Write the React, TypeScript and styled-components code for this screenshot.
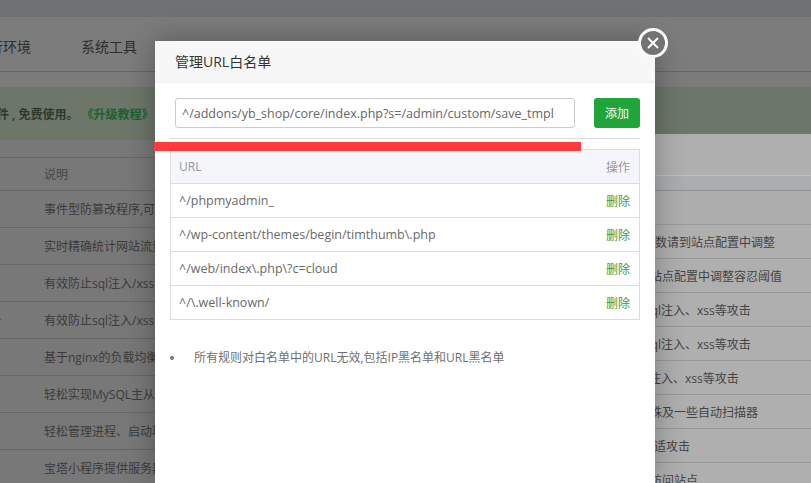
import React from "react";
import styled, { createGlobalStyle } from "styled-components";
import { X } from "lucide-react";

const FONT = `"Open Sans", "Noto Sans CJK SC", sans-serif`;

const Global = createGlobalStyle`
  html, body { margin: 0; padding: 0; background: #7b7b7b; }
  * { box-sizing: border-box; }
  body { font-family: ${FONT}; }
`;

const Page = styled.div`
  position: relative;
  width: 811px;
  height: 483px;
  overflow: hidden;
  display: flex;
  flex-direction: column;
  background: #7b7b7b;
`;
const TopStrip = styled.div`
  height: 17px;
  flex: none;
  background: #707173;
`;
const Nav = styled.nav`
  height: 55px;
  flex: none;
  display: flex;
  align-items: center;
  gap: 50px;
  margin-left: -25px;
  padding-top: 4px;
  background: #7c7c7c;
  border-bottom: 1px solid #666;
  color: #2e2e2e;
  font-size: 14px;
`;
const Panes = styled.div`
  flex: 1;
  display: flex;
  padding-top: 15px;
  min-height: 0;
`;
const LeftPane = styled.div`
  width: 155px;
  flex: none;
  overflow: hidden;
  background: #787878;
`;
const Gap = styled.div`
  width: 500px;
  flex: none;
`;
const RightPane = styled.div`
  flex: 1;
  overflow: hidden;
  background: #afafaf;
`;
const Banner = styled.div<{ $h: number }>`
  height: ${(p) => p.$h}px;
  display: flex;
  align-items: center;
  margin-left: -15px;
  white-space: pre;
  background: #6c7669;
  color: #2f3a2d;
  font-size: 12px;
  font-weight: 600;
`;
const BannerLink = styled.span`
  color: #1c6130;
  margin-left: 3px;
`;
const LeftHead = styled.div`
  margin-top: 17px;
  height: 34px;
  padding-left: 44px;
  display: flex;
  align-items: center;
  border-top: 1px solid #666;
  border-bottom: 1px solid #666;
  color: #464646;
  font-size: 12px;
`;
const LeftRow = styled.div`
  height: 37px;
  padding-left: 44px;
  display: flex;
  align-items: center;
  white-space: nowrap;
  border-bottom: 1px solid #666;
  color: #3b3b3b;
  font-size: 12px;
  position: relative;
`;
const Tick = styled.span`
  position: absolute;
  left: -1px;
  top: 17px;
  width: 2px;
  height: 1px;
  background: #2b5d80;
`;
const RightHead = styled.div`
  margin-top: 41px;
  height: 16px;
  border-top: 1px solid #c0c0c0;
  border-bottom: 1px solid #8f8f8f;
  background: #acadb0;
`;
const RightSpacer = styled.div`
  height: 34px;
  border-bottom: 1px solid #9a9a9a;
  background: #aeaeae;
`;
const RightRow = styled.div`
  height: 34px;
  display: flex;
  align-items: center;
  white-space: nowrap;
  border-bottom: 1px solid #999;
  color: #444;
  font-size: 12px;
`;
const RightText = styled.span<{ $shift: number }>`
  margin-left: ${(p) => p.$shift}px;
`;

const Modal = styled.div`
  position: absolute;
  left: 155px;
  top: 41px;
  width: 500px;
  height: 442px;
  background: #fff;
  box-shadow: 0 0 28px rgba(0, 0, 0, 0.3);
  display: flex;
  flex-direction: column;
`;
const ModalHeader = styled.header`
  height: 42px;
  flex: none;
  display: flex;
  align-items: center;
  padding: 0 0 2px 20px;
  background: #f7f7f7;
  border-bottom: 1px solid #eee;
  color: #333;
  font-size: 14px;
`;
const CloseButton = styled.button`
  position: absolute;
  left: 483px;
  top: -13px;
  width: 30px;
  height: 30px;
  padding: 0;
  display: flex;
  align-items: center;
  justify-content: center;
  border: 3px solid #fff;
  border-radius: 50%;
  background: #737373;
  color: #fff;
`;
const Body = styled.div`
  padding: 15px 15px 0;
  display: flex;
  flex-direction: column;
`;
const Form = styled.div`
  display: flex;
  justify-content: space-between;
  padding: 0 0 10px 5px;
  border-bottom: 1px solid #ddd;
`;
const Input = styled.input`
  width: 400px;
  height: 30px;
  padding: 0 6px;
  border: 1px solid #ccc;
  border-radius: 3px;
  color: #666;
  font-family: ${FONT};
  font-size: 12.5px;
  outline: none;
`;
const AddButton = styled.button`
  width: 46px;
  height: 30px;
  padding: 0;
  border: 0;
  border-radius: 3px;
  background: #20a53a;
  color: #fff;
  font-family: ${FONT};
  font-size: 12px;
`;
const RedMark = styled.div`
  position: absolute;
  left: -1px;
  top: 101px;
  width: 427px;
  height: 9px;
  background: #ff3b3b;
  z-index: 1;
`;
const Table = styled.div`
  margin-top: 10px;
  border: 1px solid #ddd;
  border-bottom: 0;
`;
const Row = styled.div<{ $head?: boolean }>`
  height: 34px;
  display: flex;
  align-items: center;
  justify-content: space-between;
  padding: 0 8px;
  border-bottom: 1px solid #ddd;
  background: ${(p) => (p.$head ? "#f5f6fa" : "#fff")};
  color: ${(p) => (p.$head ? "#999" : "#6a6a6a")};
  font-size: 12px;
`;
const RuleText = styled.span`
  font-size: 12.5px;
`;
const Action = styled.span<{ $green?: boolean }>`
  margin-right: 1px;
  color: ${(p) => (p.$green ? "#2f9e4a" : "#999")};
`;
const Note = styled.div`
  margin-top: 30px;
  display: flex;
  align-items: center;
  gap: 20px;
  color: #6f6f6f;
  font-size: 12px;
  line-height: 16px;
`;
const Dot = styled.span`
  width: 4px;
  height: 4px;
  flex: none;
  border-radius: 50%;
  background: #777;
`;

const rules = [
  "^/phpmyadmin_",
  "^/wp-content/themes/begin/timthumb\\.php",
  "^/web/index\\.php\\?c=cloud",
  "^/\\.well-known/",
];
const leftRows = [
  "事件型防篡改程序,可",
  "实时精确统计网站流量",
  "有效防止sql注入/xss",
  "有效防止sql注入/xss",
  "基于nginx的负载均衡",
  "轻松实现MySQL主从",
  "轻松管理进程、启动项",
  "宝塔小程序提供服务器",
];
const rightRows: [string, number][] = [
  ["数请到站点配置中调整", 0],
  ["站点配置中调整容忍阈值", -5],
  ["sql注入、xss等攻击", -10],
  ["sql注入、xss等攻击", -10],
  ["注入、xss等攻击", -6],
  ["殊及一些自动扫描器", -5],
  ["适攻击", -1],
  ["访问站点", -5],
];

export default function App() {
  return (
    <Page>
      <Global />
      <TopStrip />
      <Nav>
        <span>运行环境</span>
        <span>系统工具</span>
      </Nav>
      <Panes>
        <LeftPane>
          <Banner $h={53}>
            {"插件 , 免费使用。"}
            <BannerLink>《升级教程》</BannerLink>
          </Banner>
          <LeftHead>说明</LeftHead>
          {leftRows.map((t, i) => (
            <LeftRow key={i}>
              {i === 3 && <Tick />}
              {t}
            </LeftRow>
          ))}
        </LeftPane>
        <Gap />
        <RightPane>
          <Banner $h={47} />
          <RightHead />
          <RightSpacer />
          {rightRows.map(([t, s], i) => (
            <RightRow key={i}>
              <RightText $shift={s}>{t}</RightText>
            </RightRow>
          ))}
        </RightPane>
      </Panes>
      <Modal>
        <CloseButton aria-label="关闭">
          <X size={18} strokeWidth={2.4} />
        </CloseButton>
        <ModalHeader>管理URL白名单</ModalHeader>
        <RedMark />
        <Body>
          <Form>
            <Input readOnly value="^/addons/yb_shop/core/index.php?s=/admin/custom/save_tmpl" />
            <AddButton>添加</AddButton>
          </Form>
          <Table>
            <Row $head>
              <span>URL</span>
              <Action>操作</Action>
            </Row>
            {rules.map((r) => (
              <Row key={r}>
                <RuleText>{r}</RuleText>
                <Action $green>删除</Action>
              </Row>
            ))}
          </Table>
          <Note>
            <Dot />
            <span>所有规则对白名单中的URL无效,包括IP黑名单和URL黑名单</span>
          </Note>
        </Body>
      </Modal>
    </Page>
  );
}
